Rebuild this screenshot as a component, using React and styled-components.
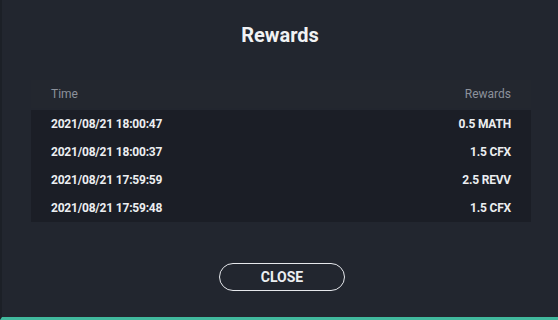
import React from "react";
import styled, { createGlobalStyle } from "styled-components";

const GlobalStyle = createGlobalStyle`
    html, body {
        margin: 0;
        padding: 0;
        background: #22262f;
    }
    * {
        box-sizing: border-box;
    }
`;

const Modal = styled.div`
    width: 558px;
    height: 320px;
    background: #22262f;
    border-left: 2px solid #1c2027;
    border-bottom: 3px solid #41b89d;
    font-family: Roboto, "Liberation Sans", sans-serif;
    display: flex;
    flex-direction: column;
    align-items: center;
    padding-top: 23px;
`;

const Title = styled.h2`
    margin: 0;
    font-size: 20px;
    font-weight: 700;
    color: #f1f2f4;
    line-height: 24px;
`;

const Table = styled.div`
    width: 500px;
    margin-top: 33px;
    margin-left: 2px;
`;

const Row = styled.div`
    display: flex;
    justify-content: space-between;
    align-items: center;
    height: 28px;
    padding: 0 20px;
    background: ${(props) => (props.head ? "#23272f" : "#1b1e26")};
    color: ${(props) => (props.head ? "#8c919b" : "#eceef1")};
    font-size: 12px;
    font-weight: ${(props) => (props.head ? 400 : 700)};
    letter-spacing: ${(props) => (props.head ? "0" : "-0.2px")};
`;

const Body = styled.div`
    margin-top: 2px;
    background: #1b1e26;
`;

const CloseButton = styled.button`
    margin-top: 41px;
    margin-left: 4px;
    width: 126px;
    height: 28px;
    border: 1px solid #e6e8ec;
    border-radius: 14px;
    background: transparent;
    color: #eceef1;
    font-family: Roboto, "Liberation Sans", sans-serif;
    font-size: 14px;
    font-weight: 700;
    cursor: pointer;
`;

const rewards = [
    { time: "2021/08/21 18:00:47", amount: "0.5 MATH" },
    { time: "2021/08/21 18:00:37", amount: "1.5 CFX" },
    { time: "2021/08/21 17:59:59", amount: "2.5 REVV" },
    { time: "2021/08/21 17:59:48", amount: "1.5 CFX" },
];

const App = () => {
    return (
        <>
            <GlobalStyle />
            <Modal>
                <Title>Rewards</Title>
                <Table>
                    <Row head>
                        <span>Time</span>
                        <span>Rewards</span>
                    </Row>
                    <Body>
                        {rewards.map((r, i) => (
                            <Row key={i}>
                                <span>{r.time}</span>
                                <span>{r.amount}</span>
                            </Row>
                        ))}
                    </Body>
                </Table>
                <CloseButton>CLOSE</CloseButton>
            </Modal>
        </>
    );
};

export default App;
